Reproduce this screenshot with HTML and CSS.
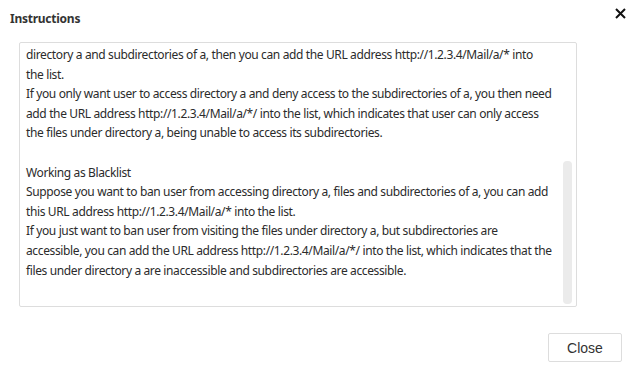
FILE: index.html
```html
<!DOCTYPE html>
<html lang="en">
<head>
    <meta charset="UTF-8">
    <title>Instructions</title>
    <link rel="stylesheet" href="styles.css">
</head>
<body>
    <div class="dialog">
        <div class="dialog-header">
            <span class="dialog-title">Instructions</span>
            <span class="dialog-close">
                <svg width="11" height="11" viewBox="0 0 11 11"><path d="M1 1L10 10M10 1L1 10" stroke="#111" stroke-width="2"/></svg>
            </span>
        </div>
        <div class="dialog-body">
            <div class="help-box">
                <div class="help-text">
                    directory a and subdirectories of a, then you can add the URL address http://1.2.3.4/Mail/a/* into<br>
                    the list.<br>
                    If you only want user to access directory a and deny access to the subdirectories of a, you then need<br>
                    add the URL address http://1.2.3.4/Mail/a/*/ into the list, which indicates that user can only access<br>
                    the files under directory a, being unable to access its subdirectories.<br>
                    <br>
                    Working as Blacklist<br>
                    Suppose you want to ban user from accessing directory a, files and subdirectories of a, you can add<br>
                    this URL address http://1.2.3.4/Mail/a/* into the list.<br>
                    If you just want to ban user from visiting the files under directory a, but subdirectories are<br>
                    accessible, you can add the URL address http://1.2.3.4/Mail/a/*/ into the list, which indicates that the<br>
                    files under directory a are inaccessible and subdirectories are accessible.
                </div>
                <div class="scroll-thumb"></div>
            </div>
        </div>
        <div class="dialog-footer">
            <button class="btn">Close</button>
        </div>
    </div>
</body>
</html>
```
FILE: styles.css
```css
body {
    margin: 0;
    background: #fff;
    font-family: "Noto Sans", "Open Sans", sans-serif;
    color: #333;
}
.dialog {
    width: 635px;
    height: 366px;
}
.dialog-header {
    display: flex;
    justify-content: space-between;
    align-items: center;
    padding: 7px 9px 0 10px;
    height: 22px;
}
.dialog-title {
    font-size: 12px;
    font-weight: bold;
    letter-spacing: -0.25px;
    color: #333;
}
.dialog-close {
    display: flex;
    margin-top: -9px;
}
.dialog-body {
    padding: 13px 58px 0 19px;
}
.help-box {
    position: relative;
    height: 263px;
    border: 1px solid #ddd;
    border-radius: 2px;
    overflow: hidden;
}
.help-text {
    padding: 2px 0 0 6px;
    font-size: 12px;
    letter-spacing: -0.37px;
    line-height: 19.6px;
    white-space: nowrap;
    color: #2b2b2b;
}
.scroll-thumb {
    position: absolute;
    right: 4px;
    top: 118px;
    width: 9px;
    height: 143px;
    border-radius: 4px;
    background: #ebebeb;
}
.dialog-footer {
    display: flex;
    justify-content: flex-end;
    padding: 26px 13px 0 0;
}
.btn {
    width: 74px;
    height: 29px;
    background: #fff;
    border: 1px solid #ddd;
    border-radius: 2px;
    font-family: "Liberation Sans", Arial, sans-serif;
    font-size: 14px;
    color: #333;
}
```
